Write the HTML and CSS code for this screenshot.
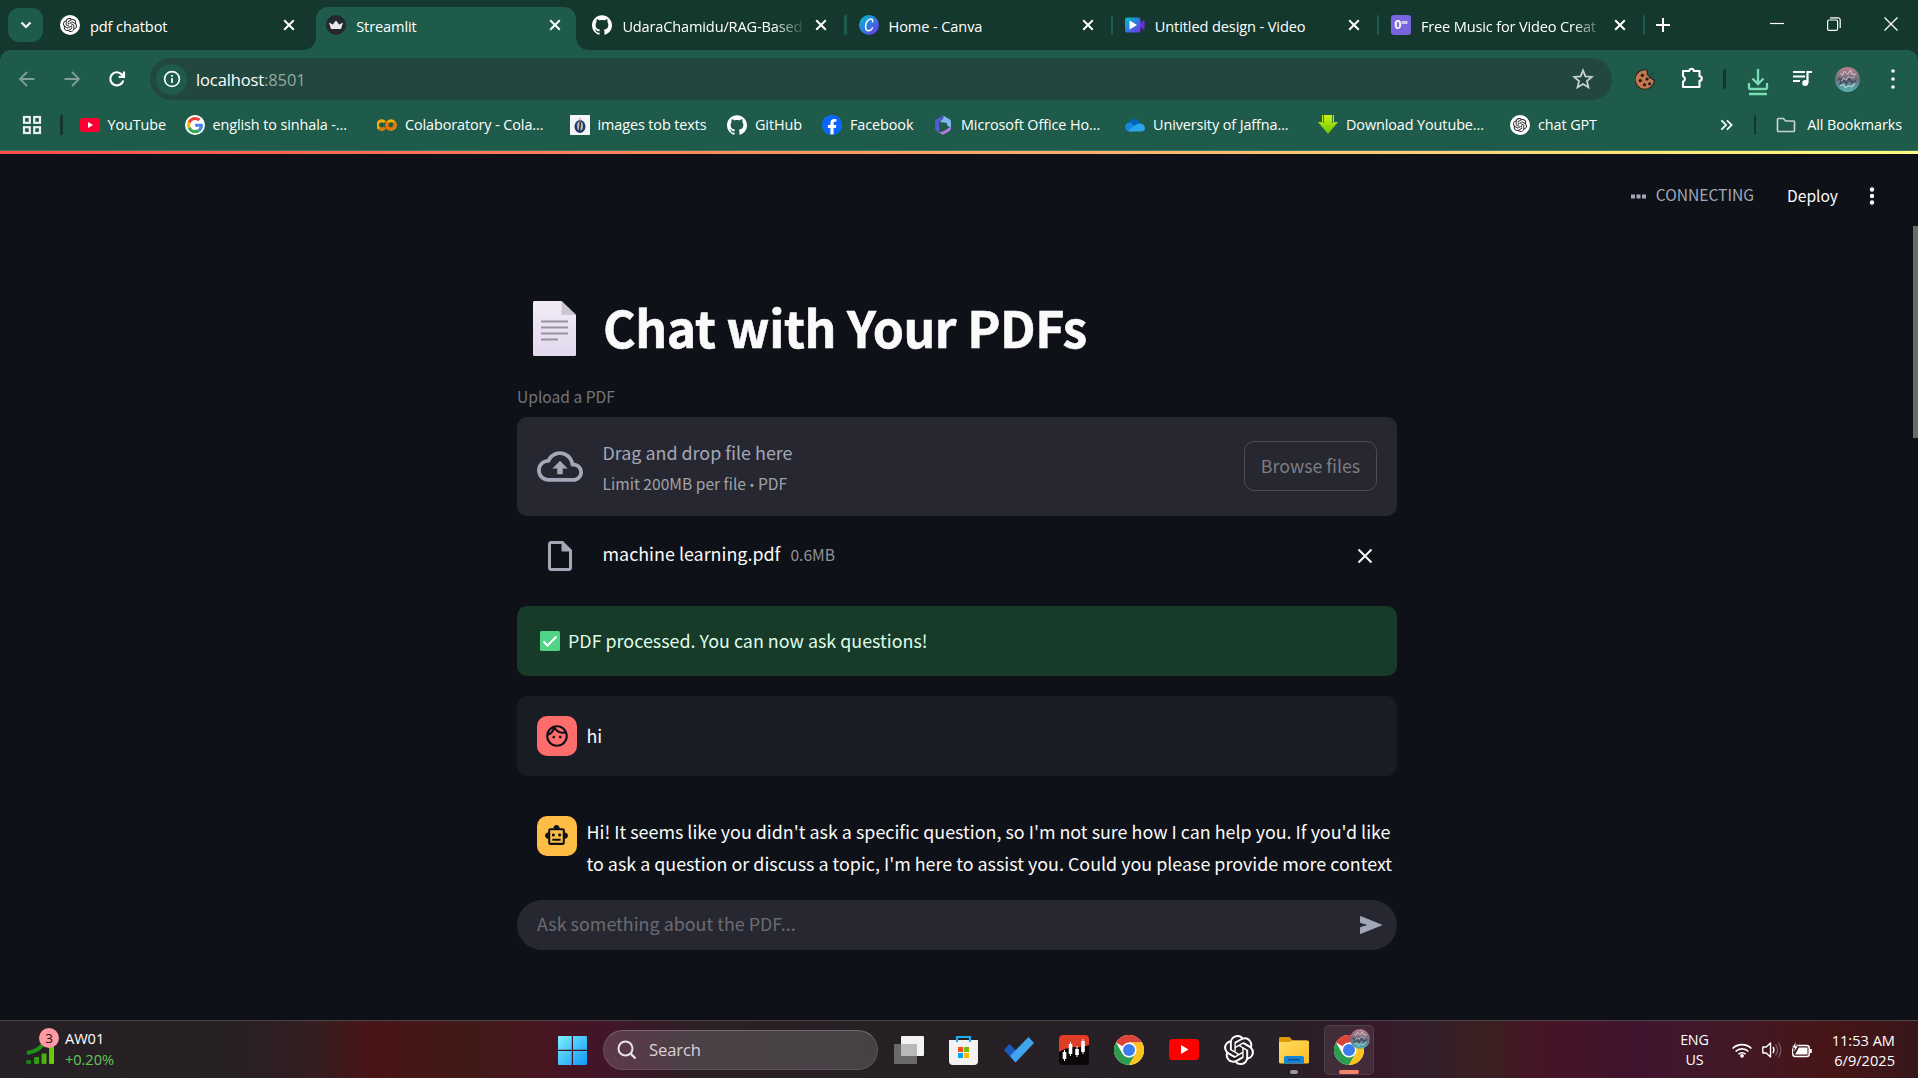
FILE: index.html
```html
<!DOCTYPE html>
<html lang="en">
<head>
<meta charset="utf-8">
<title>Streamlit</title>
<link rel="stylesheet" href="styles.css">
</head>
<body>
<svg class="defs" width="0" height="0">
  <defs>
    <symbol id="openai" viewBox="0 0 24 24"><path d="M22.2819 9.8211a5.9847 5.9847 0 0 0-.5157-4.9108 6.0462 6.0462 0 0 0-6.5098-2.9A6.0651 6.0651 0 0 0 4.9807 4.1818a5.9847 5.9847 0 0 0-3.9977 2.9 6.0462 6.0462 0 0 0 .7427 7.0966 5.98 5.98 0 0 0 .511 4.9107 6.051 6.051 0 0 0 6.5146 2.9001A5.9847 5.9847 0 0 0 13.2599 24a6.0557 6.0557 0 0 0 5.7718-4.2058 5.9894 5.9894 0 0 0 3.9977-2.9001 6.0557 6.0557 0 0 0-.7475-7.0729zm-9.022 12.6081a4.4755 4.4755 0 0 1-2.8764-1.0408l.1419-.0804 4.7783-2.7582a.7948.7948 0 0 0 .3927-.6813v-6.7369l2.02 1.1686a.071.071 0 0 1 .038.052v5.5826a4.504 4.504 0 0 1-4.4945 4.4944zm-9.6607-4.1254a4.4708 4.4708 0 0 1-.5346-3.0137l.142.0852 4.783 2.7582a.7712.7712 0 0 0 .7806 0l5.8428-3.3685v2.3324a.0804.0804 0 0 1-.0332.0615L9.74 19.9502a4.4992 4.4992 0 0 1-6.1408-1.6464zM2.3408 7.8956a4.485 4.485 0 0 1 2.3655-1.9728V11.6a.7664.7664 0 0 0 .3879.6765l5.8144 3.3543-2.0201 1.1685a.0757.0757 0 0 1-.071 0l-4.8303-2.7865A4.504 4.504 0 0 1 2.3408 7.872zm16.5963 3.8558L13.1038 8.364 15.1192 7.2a.0757.0757 0 0 1 .071 0l4.8303 2.7913a4.4944 4.4944 0 0 1-.6765 8.1042v-5.6772a.79.79 0 0 0-.407-.667zm2.0107-3.0231l-.142-.0852-4.7735-2.7818a.7759.7759 0 0 0-.7854 0L9.409 9.2297V6.8974a.0662.0662 0 0 1 .0284-.0615l4.8303-2.7866a4.4992 4.4992 0 0 1 6.6802 4.66zM8.3065 12.863l-2.02-1.1638a.0804.0804 0 0 1-.038-.0567V6.0742a4.4992 4.4992 0 0 1 7.3757-3.4537l-.142.0805L8.704 5.459a.7948.7948 0 0 0-.3927.6813zm1.0976-2.3654l2.602-1.4998 2.6069 1.4998v2.9994l-2.5974 1.4997-2.6067-1.4997Z"/></symbol>
    <symbol id="github" viewBox="0 0 24 24"><path d="M12 .297c-6.63 0-12 5.373-12 12 0 5.303 3.438 9.8 8.205 11.385.6.113.82-.258.82-.577 0-.285-.01-1.04-.015-2.04-3.338.724-4.042-1.61-4.042-1.61C4.422 18.07 3.633 17.7 3.633 17.7c-1.087-.744.084-.729.084-.729 1.205.084 1.838 1.236 1.838 1.236 1.07 1.835 2.809 1.305 3.495.998.108-.776.417-1.305.76-1.605-2.665-.3-5.466-1.332-5.466-5.93 0-1.31.465-2.38 1.235-3.22-.135-.303-.54-1.523.105-3.176 0 0 1.005-.322 3.3 1.23.96-.267 1.98-.399 3-.405 1.02.006 2.04.138 3 .405 2.28-1.552 3.285-1.23 3.285-1.23.645 1.653.24 2.873.12 3.176.765.84 1.23 1.91 1.23 3.22 0 4.61-2.805 5.625-5.475 5.92.42.36.81 1.096.81 2.22 0 1.606-.015 2.896-.015 3.286 0 .315.21.69.825.57C20.565 22.092 24 17.592 24 12.297c0-6.627-5.373-12-12-12"/></symbol>
    <symbol id="chatgpt" viewBox="0 0 20 20"><circle cx="10" cy="10" r="10" fill="#fff"/><use href="#openai" x="3" y="3" width="14" height="14" fill="#222"/></symbol>
    <symbol id="close" viewBox="0 0 12 12"><path d="M1.2 1.2l9.6 9.6M10.8 1.2l-9.6 9.6" stroke="#fff" stroke-width="2" fill="none"/></symbol>
    <symbol id="chrome" viewBox="0 0 30 30">
      <circle cx="15" cy="15" r="15" fill="#fff"/>
      <path d="M15 15L2 7.5A15 15 0 0 1 28 7.5H15z" fill="#db4437"/>
      <path d="M2 7.5A15 15 0 0 0 15 30L21.5 18.75 15 15 8.5 18.75z" fill="#2d9c4f"/>
      <path d="M28 7.5A15 15 0 0 1 15 30L21.5 18.75 15 7.5z" fill="#fcc31e"/>
      <circle cx="15" cy="15" r="7.5" fill="#fff"/><circle cx="15" cy="15" r="6" fill="#3b7ded"/>
    </symbol>
    <linearGradient id="canva" x1="0" y1="0" x2="1" y2="1"><stop offset="0" stop-color="#00c4cc"/><stop offset=".5" stop-color="#2f7be0"/><stop offset="1" stop-color="#7d2ae8"/></linearGradient>
    <linearGradient id="lime" x1="0" y1="0" x2="0" y2="1"><stop offset="0" stop-color="#c6ee1a"/><stop offset="1" stop-color="#6fc400"/></linearGradient>
    <linearGradient id="m365" x1="0" y1="0" x2="1" y2="1"><stop offset="0" stop-color="#5a4fc4"/><stop offset=".5" stop-color="#4b60d8"/><stop offset="1" stop-color="#8a4fd0"/></linearGradient>
    <linearGradient id="win" x1="0" y1="0" x2="1" y2="1"><stop offset="0" stop-color="#7df0ff"/><stop offset="1" stop-color="#0e97fa"/></linearGradient>
    <linearGradient id="folder" x1="0" y1="0" x2="1" y2="1"><stop offset="0" stop-color="#ffdc62"/><stop offset="1" stop-color="#fbbd22"/></linearGradient>
    <linearGradient id="stock" gradientUnits="userSpaceOnUse" x1="0" y1="0" x2="28" y2="0"><stop offset="0" stop-color="#0f7a14"/><stop offset="1" stop-color="#72cf0c"/></linearGradient>
    <linearGradient id="page" x1="0" y1="0" x2="0" y2="1"><stop offset="0" stop-color="#f1ebf6"/><stop offset="1" stop-color="#e2d8ec"/></linearGradient>
    <linearGradient id="avatar" x1="0" y1="0" x2="0" y2="1"><stop offset="0" stop-color="#b9818c"/><stop offset=".5" stop-color="#6d6f80"/><stop offset="1" stop-color="#54b3b3"/></linearGradient>
    <symbol id="face" viewBox="0 0 24 24"><circle cx="12" cy="12" r="12" fill="url(#avatar)"/><g fill="none"><path d="M5 6l2 2 2-4 3 3 3-4 1 4 4 0" stroke="#e9cfd6" stroke-width=".9"/><path d="M3 11l3 1-1 4 4-3 2 3 3-5 2 4 4-2" stroke="#343a4c" stroke-width="1.300" opacity=".8"/><path d="M6 14l2-3 3 1 2-3 3 2 3-2" stroke="#c9b7c4" stroke-width=".9"/><path d="M5 18l3-1 2 3 3-2 3 1 3-3" stroke="#a7e6e0" stroke-width="1"/></g></symbol>
  </defs>
</svg>

<div class="browser">
  <div class="tabstrip">
    <button class="tab-search"><svg width="12" height="8" viewBox="0 0 12 8"><path d="M1.500 1.500L6 6l4.500-4.500" stroke="#fff" stroke-width="2.200" fill="none"/></svg></button>
    <div class="tab"><svg class="fav"><use href="#chatgpt"/></svg><span class="tab-title">pdf chatbot</span><svg class="x"><use href="#close"/></svg></div>
    <div class="tab active"><svg class="fav" viewBox="0 0 20 20"><circle cx="10" cy="10" r="10" fill="#262730"/><path d="M3 7.500l3.800 2L10 5.500l3.200 4 3.800-2-2 6.500H5z" fill="#e8e8ea"/></svg><span class="tab-title">Streamlit</span><svg class="x"><use href="#close"/></svg></div>
    <div class="tab divided"><svg class="fav" fill="#fff"><use href="#github"/></svg><span class="tab-title fade">UdaraChamidu/RAG-Based</span><svg class="x"><use href="#close"/></svg></div>
    <div class="tab divided"><svg class="fav" viewBox="0 0 20 20"><circle cx="10" cy="10" r="10" fill="url(#canva)"/><path d="M13.600 6.800c.4-1.700-.4-2.800-1.700-2.800C8.800 4 6.600 8 6.600 11.400c0 2.600 1.200 4.300 3.100 4.300 1.700 0 3-1.200 3.800-2.700" stroke="#fff" stroke-width="1.500" fill="none" stroke-linecap="round"/></svg><span class="tab-title">Home - Canva</span><svg class="x"><use href="#close"/></svg></div>
    <div class="tab divided"><svg class="fav" viewBox="0 0 20 20"><path d="M13 10l6.500-5.500v11z" fill="#6d2ae0"/><rect x="0" y="2.500" width="15.500" height="15" rx="2.500" fill="url(#canva)"/><path d="M4.500 5.500v9l7.500-4.500z" fill="#fff"/></svg><span class="tab-title">Untitled design - Video</span><svg class="x"><use href="#close"/></svg></div>
    <div class="tab divided"><span class="fav music">0<sup>∞</sup></span><span class="tab-title fade">Free Music for Video Creat</span><svg class="x"><use href="#close"/></svg></div>
    <svg class="new-tab" viewBox="0 0 14 14"><path d="M7 0v14M0 7h14" stroke="#fff" stroke-width="2"/></svg>
    <div class="window-buttons">
      <svg width="14" height="14" viewBox="0 0 14 14"><path d="M0 6.500h14" stroke="#fff" stroke-width="1.200"/></svg>
      <svg width="14" height="14" viewBox="0 0 14 14"><rect x=".6" y="3" width="10" height="10.400" rx="1.500" fill="none" stroke="#fff" stroke-width="1.200"/><path d="M3 .8h8a2.200 2.200 0 0 1 2.200 2.200v8" fill="none" stroke="#fff" stroke-width="1.200"/></svg>
      <svg width="14" height="14" viewBox="0 0 14 14"><path d="M.5.5l13 13M13.500.5l-13 13" stroke="#fff" stroke-width="1.300"/></svg>
    </div>
  </div>

  <div class="chrome-bars">
    <div class="toolbar">
      <svg class="nav dim" viewBox="0 0 20 20"><path d="M17.500 10H3.500M10 3L3 10l7 7" /></svg>
      <svg class="nav dim" viewBox="0 0 20 20"><path d="M2.500 10h14M10 3l7 7-7 7"/></svg>
      <svg class="nav reload" viewBox="0 0 20 20"><path d="M16.300 11.500A6.600 6.600 0 1 1 14.800 5.400L16.500 7"/><path d="M17 2.500v5.300h-5.300"/></svg>
      <div class="omnibox">
        <span class="site-info"><svg width="18" height="18" viewBox="0 0 18 18"><circle cx="9" cy="9" r="7.400" fill="none" stroke="#fff" stroke-width="1.700"/><path d="M9 8v5M9 5v1.700" stroke="#fff" stroke-width="1.700"/></svg></span>
        <span class="url">localhost<span class="port">:8501</span></span>
        <svg class="star" viewBox="0 0 20 20"><path d="M10 2.200l2.200 5.400 5.800.5-4.400 3.800 1.400 5.700L10 14.500 5 17.600l1.400-5.700L2 8.100l5.800-.5z" fill="none" stroke="#c7d1ce" stroke-width="1.600"/></svg>
      </div>
      <div class="actions">
        <svg class="cookie" viewBox="0 0 20 20"><path d="M11 .8a9.300 9.300 0 1 0 7.600 9.700c-1.400.2-2.400-.4-2.600-1.700-1.700.2-2.800-.7-2.500-2.300-1.600-.4-2.500-1.900-1.500-3.400z" fill="#c2784e" stroke="#2b211f"/><g fill="#1f1718"><circle cx="7" cy="6" r="1.500"/><circle cx="11.500" cy="9.500" r="1.500"/><circle cx="5" cy="11" r="1.500"/><circle cx="9" cy="15" r="1.500"/><circle cx="14" cy="14" r="1.500"/><circle cx="16.500" cy="4.500" r=".8"/></g></svg>
        <svg class="puzzle" viewBox="0 0 22 22"><path d="M2 4h6.300a2.200 2.200 0 0 1 4.400 0H18.500v5.200a2.300 2.300 0 0 1 0 4.600V20H2v-5.200a3 3 0 0 0 0-5.600z" fill="none" stroke="#fff" stroke-width="2.100" stroke-linejoin="round"/></svg>
        <i class="sep"></i>
        <svg class="download" viewBox="0 0 22 28"><path d="M11 1v15M5.500 10.500L11 16l5.500-5.500M2 15v4.500a1.500 1.500 0 0 0 1.500 1.500h15a1.500 1.500 0 0 0 1.500-1.500V15M2 26h18" fill="none" stroke="#7bdcb5" stroke-width="2.300"/></svg>
        <svg class="media" viewBox="0 0 20 20"><path d="M1 4h12M1 8.500h12M1 13h7" stroke="#fff" stroke-width="2.200"/><path d="M15.500 15V4H20" stroke="#fff" stroke-width="2.200" fill="none"/><circle cx="13.200" cy="15" r="3" fill="#fff"/></svg>
        <svg class="avatar"><use href="#face"/></svg>
        <svg class="menu" viewBox="0 0 10 24"><g fill="#fff"><circle cx="5" cy="4" r="1.800"/><circle cx="5" cy="12" r="1.800"/><circle cx="5" cy="20" r="1.800"/></g></svg>
      </div>
    </div>

    <div class="bookmarks">
      <svg class="apps" viewBox="0 0 20 20"><g fill="none" stroke="#e8efec" stroke-width="2.200"><rect x="2" y="2" width="5.800" height="5.800"/><rect x="12.200" y="2" width="5.800" height="5.800"/><rect x="2" y="12.200" width="5.800" height="5.800"/><rect x="12.200" y="12.200" width="5.800" height="5.800"/></g></svg>
      <i class="sep"></i>
      <a class="bm w105"><svg class="fav" viewBox="0 0 20 20"><rect y="3" width="20" height="14" rx="3" fill="#f03"/><path d="M8 7v6l5-3z" fill="#fff"/></svg>YouTube</a>
      <a class="bm w193"><svg class="fav" viewBox="0 0 48 48"><circle cx="24" cy="24" r="24" fill="#fff"/><g transform="translate(4.500 4.500) scale(.82)"><path fill="#EA4335" d="M24 9.500c3.540 0 6.710 1.220 9.210 3.600l6.850-6.850C35.900 2.380 30.470 0 24 0 14.620 0 6.510 5.380 2.560 13.220l7.980 6.190C12.430 13.720 17.740 9.500 24 9.500z"/><path fill="#4285F4" d="M46.980 24.550c0-1.570-.15-3.090-.38-4.550H24v9.020h12.940c-.58 2.960-2.260 5.480-4.780 7.180l7.730 6c4.510-4.180 7.090-10.360 7.090-17.650z"/><path fill="#FBBC05" d="M10.530 28.590c-.48-1.450-.76-2.990-.76-4.590s.27-3.140.76-4.590l-7.980-6.190C.92 16.460 0 20.120 0 24c0 3.880.92 7.540 2.560 10.780l7.970-6.190z"/><path fill="#34A853" d="M24 48c6.480 0 11.930-2.130 15.890-5.810l-7.730-6c-2.150 1.450-4.920 2.300-8.160 2.300-6.260 0-11.570-4.220-13.470-9.910l-7.980 6.190C6.510 42.620 14.620 48 24 48z"/></g></svg>english to sinhala -...</a>
      <a class="bm w192"><svg class="fav" viewBox="0 0 20 20"><g fill="none" stroke-width="3"><path d="M7.800 7.200A4.200 4.200 0 1 0 7.800 12.800" stroke="#f9ab00"/><path d="M2.200 13.200A4.300 4.300 0 0 0 8 12.500" stroke="#e8710a"/><circle cx="14" cy="10" r="4.300" stroke="#f9ab00"/><path d="M11 13a4.300 4.300 0 0 1 0-6" stroke="#e8710a"/><path d="M17 7a4.300 4.300 0 0 1-6 6" stroke="#e8710a"/></g></svg>Colaboratory - Cola...</a>
      <a class="bm w158"><svg class="fav" viewBox="0 0 20 20"><rect width="20" height="20" fill="#f5f5f7"/><ellipse cx="10" cy="11.500" rx="5.500" ry="6.500" fill="#1d3a70"/><ellipse cx="10" cy="11" rx="3" ry="4.500" fill="#b8b6a8"/><path d="M10.500 6.500L9.500 16" stroke="#333" stroke-width="1.500"/><circle cx="10" cy="4" r="1.500" fill="#ccc"/></svg>images tob texts</a>
      <a class="bm w95"><svg class="fav" fill="#fff"><use href="#github"/></svg>GitHub</a>
      <a class="bm w111"><svg class="fav" viewBox="0 0 24 24"><circle cx="12" cy="12" r="11.500" fill="#fff"/><path fill="#0866ff" d="M24 12.073c0-6.627-5.373-12-12-12s-12 5.373-12 12c0 5.990 4.388 10.954 10.125 11.854v-8.385H7.078v-3.470h3.047V9.430c0-3.007 1.792-4.669 4.533-4.669 1.312 0 2.686.235 2.686.235v2.953H15.830c-1.491 0-1.956.925-1.956 1.874v2.250h3.328l-.532 3.470h-2.796v8.385C19.612 23.027 24 18.062 24 12.073z"/></svg>Facebook</a>
      <a class="bm w192b"><svg class="fav" viewBox="0 0 20 20"><path d="M10 .5L3.500 4.200Q2 5 2 7v6q0 2 1.500 3l3 1.500Q6 16 6 14V8q0-2 1.500-3L12 1.500z" fill="url(#m365)"/><path d="M10 .5l6.500 3.700Q18 5 18 7v6l-4-2.500V8L7 7q.5-1.500 2-2.500Q12 2.500 10 .5z" fill="#7fb6ee"/><path d="M18 13q0 2-1.500 3L11 19.300q-1 .5-2 0L5 17q4 .5 6-1l7-4.500z" fill="#b57be6"/></svg>Microsoft Office Ho...</a>
      <a class="bm w192c"><svg class="fav" viewBox="0 0 20 20"><path d="M4 11a5.500 5.500 0 0 1 10.500-3.500L17 11z" fill="#0364b8"/><circle cx="4.500" cy="12" r="4.500" fill="#1487d8"/><path d="M4 16.500c-2-.5 8-8.500 10.500-8 4 0 5.500 3 5.500 4.500 0 2-1.500 3.500-3.500 3.500z" fill="#28a8ea"/></svg>University of Jaffna...</a>
      <a class="bm w192d"><svg class="fav" viewBox="0 0 20 20"><path d="M4 0h12v7h4L10 19 0 7h4z" fill="url(#lime)"/><path d="M5.500 0v8M14.500 0v8" stroke="#3f7f2a" stroke-width="1"/></svg>Download Youtube...</a>
      <a class="bm"><svg class="fav"><use href="#chatgpt"/></svg>chat GPT</a>
      <div class="bm-end">
        <svg class="more" viewBox="0 0 14 12"><path d="M1.500 1l5 5-5 5M7.500 1l5 5-5 5" fill="none" stroke="#fff" stroke-width="1.900"/></svg>
        <i class="sep"></i>
        <svg class="fav" viewBox="0 0 20 20"><path d="M2.500 3.500h5l2 2.500h8q1 0 1 1v8.500q0 1-1 1h-15q-1 0-1-1v-11q0-1 1-1z" fill="none" stroke="#c7d1ce" stroke-width="1.700"/></svg>
        <span>All Bookmarks</span>
      </div>
    </div>
  </div>

  <main class="app">
    <div class="decoration"></div>
    <header class="app-header">
      <svg width="15" height="5" viewBox="0 0 15 5"><path d="M0 .5h4v4H0zM5.500.5h4v4h-4zM11 .5h4v4h-4z" fill="#a3a8b8"/></svg>
      <span class="status">CONNECTING</span>
      <span class="deploy">Deploy</span>
      <svg class="kebab" width="6" height="18" viewBox="0 0 6 18"><g fill="#fafafa"><circle cx="3" cy="2.500" r="2.200"/><circle cx="3" cy="9" r="2.200"/><circle cx="3" cy="15.500" r="2.200"/></g></svg>
    </header>
    <div class="scroll-thumb"></div>

    <div class="column">
      <h1 class="title"><svg width="43" height="55" viewBox="0 0 43 55"><path d="M1.500 0h27L43 14v39.500q0 1.500-1.500 1.500h-40Q0 55 0 53.500v-52Q0 0 1.500 0z" fill="url(#page)"/><path d="M28.500 0L43 14H30q-1.500 0-1.500-1.500z" fill="#cdc5d3"/><path d="M8 20.500h27M8 26.500h27M8 32.500h27M8 38.500h17" stroke="#998fa3" stroke-width="2"/></svg><span>Chat with Your PDFs</span></h1>

      <div class="label">Upload a PDF</div>
      <section class="dropzone">
        <svg class="cloud" viewBox="0 4 24 16"><path fill="#a3a8b8" d="M19.350 10.040C18.670 6.590 15.640 4 12 4 9.110 4 6.600 5.640 5.350 8.040 2.340 8.360 0 10.910 0 14c0 3.310 2.690 6 6 6h13c2.760 0 5-2.240 5-5 0-2.640-2.050-4.780-4.650-4.960zM19 18H6c-2.210 0-4-1.790-4-4 0-2.050 1.530-3.760 3.560-3.970l1.070-.11.5-.95C8.080 7.140 9.940 6 12 6c2.620 0 4.880 1.860 5.390 4.430l.3 1.500 1.530.11c1.560.1 2.780 1.410 2.780 2.960 0 1.650-1.350 3-3 3zM8 13h2.550v3h2.900v-3H16l-4-4-4 4z"/></svg>
        <div class="hint"><span>Drag and drop file here</span><small>Limit 200MB per file <i class="dot">•</i> PDF</small></div>
        <button class="browse">Browse files</button>
      </section>

      <div class="file">
        <svg class="doc" viewBox="0 0 24 24"><path fill="#a3a8b8" d="M14 2H6c-1.100 0-1.990.9-1.990 2L4 20c0 1.100.89 2 1.990 2H18c1.100 0 2-.9 2-2V8l-6-6zM6 20V4h7v5h5v11H6z"/></svg>
        <span class="file-name">machine learning.pdf</span><span class="file-size">0.6MB</span>
        <svg class="remove" viewBox="0 0 16 16"><path d="M1.500 1.500l13 13M14.500 1.500l-13 13" stroke="#fafafa" stroke-width="2"/></svg>
      </div>

      <div class="success"><svg width="20" height="20" viewBox="0 0 20 20"><rect width="20" height="20" rx="1.500" fill="#4fd585"/><path d="M3.500 10.500l4 4L16.500 5.500" fill="none" stroke="#fff" stroke-width="2"/></svg><span>PDF processed. You can now ask questions!</span></div>

      <div class="message user">
        <span class="who red"><svg width="26" height="26" viewBox="0 0 24 24"><path d="M10.250 13c0 .69-.56 1.250-1.250 1.250S7.750 13.690 7.750 13s.56-1.250 1.250-1.250 1.250.56 1.250 1.250zM15 11.750c-.69 0-1.250.56-1.250 1.250s.56 1.250 1.250 1.250 1.250-.56 1.250-1.250-.56-1.250-1.250-1.250zm7 .25c0 5.520-4.480 10-10 10S2 17.520 2 12 6.480 2 12 2s10 4.480 10 10zM10.660 4.120C12.060 6.440 14.600 8 17.500 8c.46 0 .91-.05 1.340-.12C17.440 5.560 14.900 4 12 4c-.46 0-.91.05-1.340.12zM4.420 9.470c1.710-.97 3.030-2.550 3.660-4.440C6.370 6 5.050 7.580 4.420 9.470zM20 12c0-.78-.12-1.530-.33-2.240-.7.15-1.420.24-2.170.24-3.130 0-5.920-1.440-7.760-3.690C8.690 8.870 6.600 10.880 4 11.860c.01.04 0 .09 0 .14 0 4.410 3.590 8 8 8s8-3.590 8-8z" fill="#0e1117"/></svg></span>
        <p>hi</p>
      </div>
      <div class="message bot">
        <span class="who amber"><svg width="25" height="25" viewBox="0 0 24 24"><path d="M20 9V7c0-1.100-.9-2-2-2h-3c0-1.660-1.340-3-3-3S9 3.340 9 5H6c-1.100 0-2 .9-2 2v2c-1.660 0-3 1.340-3 3s1.340 3 3 3v4c0 1.100.9 2 2 2h12c1.100 0 2-.9 2-2v-4c1.660 0 3-1.340 3-3s-1.340-3-3-3zm-2 10H6V7h12v12zm-9-6c-.83 0-1.500-.67-1.500-1.500S8.170 10 9 10s1.500.67 1.500 1.500S9.830 13 9 13zm7.500-1.500c0 .83-.67 1.500-1.500 1.500s-1.500-.67-1.500-1.500.67-1.500 1.500-1.500 1.500.67 1.500 1.500zM8 15h8v2H8v-2z" fill="#0e1117"/></svg></span>
        <p>Hi! It seems like you didn't ask a specific question, so I'm not sure how I can help you. If you'd like<br>to ask a question or discuss a topic, I'm here to assist you. Could you please provide more context</p>
      </div>

      <div class="ask"><span>Ask something about the PDF...</span><svg width="24" height="20" viewBox="0 0 24 20"><path d="M1.500 1.500L22.500 10l-21 8.500v-6l9-2.500-9-2.500z" fill="#a3a8b8" stroke="#a3a8b8" stroke-linejoin="round"/></svg></div>
    </div>
  </main>
</div>

<footer class="taskbar">
  <div class="widget">
    <svg width="30" height="24" viewBox="0 0 30 24"><g fill="url(#stock)"><rect x="0" y="19" width="5" height="4" rx="1.500"/><rect x="8" y="16" width="5" height="7" rx="1"/><rect x="15.500" y="12.500" width="5" height="10.500" rx="1"/><rect x="23" y="5" width="5" height="18" rx="1"/></g><path d="M1 12Q14 10 19 0" stroke="#22911a" stroke-width="4" fill="none"/></svg>
    <b class="badge">3</b>
    <div class="quote"><span>AW01</span><span class="up">+0.20%</span></div>
  </div>
  <div class="dock">
    <svg class="start" viewBox="0 0 29 29"><path d="M0 1Q0 0 1 0h12.800v13.800H0zM15 0h13q1 0 1 1v12.800H15zM0 15h13.800v14H1q-1 0-1-1zM15 15h14v13q0 1-1 1H15z" fill="url(#win)"/></svg>
    <div class="search"><svg width="20" height="20" viewBox="0 0 20 20"><circle cx="8.500" cy="8.500" r="7" fill="none" stroke="#e8e3e6" stroke-width="2"/><path d="M13.500 13.500l5 5" stroke="#e8e3e6" stroke-width="2.400"/></svg><span>Search</span></div>
    <svg class="t1" viewBox="0 0 30 28"><rect x="0" y="8" width="23" height="20" rx="1" fill="#6b696b"/><rect x="7" y="0" width="23" height="20" rx="1" fill="#f3f3f3"/><rect x="7" y="8" width="16" height="12" fill="#b9b9b9"/></svg>
    <svg class="t2" viewBox="0 0 29 29"><path d="M0 4h29v21q0 4-4 4H4q-4 0-4-4z" fill="#f2f2f2"/><path d="M8 6V1h13v5" fill="none" stroke="#1fb0ef" stroke-width="2.200"/><path d="M9 11h5v5H9z" fill="#f25022"/><path d="M15 11h5v5h-5z" fill="#7fba00"/><path d="M9 17h5v5H9z" fill="#00a4ef"/><path d="M15 17h5v5h-5z" fill="#ffb900"/></svg>
    <svg class="t3" viewBox="0 0 30 26"><path d="M0 13l5.500-6 12 12-6 6.500z" fill="#185abd"/><path d="M24.500 0L30 6 11.500 25.500 6 19z" fill="#41a5ee"/></svg>
    <svg class="t3" viewBox="0 0 30 30"><rect width="30" height="30" rx="4" fill="#0b0607"/><path d="M0 17V4q0-4 4-4h22q4 0 4 4v6Q22 13 17 12 8 12 0 17z" fill="#df3d26"/><path d="M5.500 15v11M11.500 7v14M18 11v11M24 4v15" stroke="#fff" stroke-width="1"/><path d="M5.500 17v7M11.500 9v10M18 14v6M24 6v11" stroke="#fff" stroke-width="3.600"/></svg>
    <svg class="t4"><use href="#chrome"/></svg>
    <svg class="t4" viewBox="0 0 30 30"><rect y="4" width="30" height="21" rx="3.500" fill="#f00"/><path d="M12 10v9l7.500-4.500z" fill="#fff"/></svg>
    <svg class="t4" fill="#fff"><use href="#openai"/></svg>
    <div class="app-icon"><svg width="30" height="27" viewBox="0 0 30 27"><path d="M0 1.500Q0 0 1.500 0h9l3 3.500H28V8H0z" fill="#dd9b0a"/><path d="M0 5h10.500L13 3.500h15.500q1.500 0 1.500 1.500v20q0 1.500-1.500 1.500h-27Q0 26.500 0 25z" fill="url(#folder)"/><path d="M5 26.500V21q0-2 2-2h16q2 0 2 2v5.500z" fill="#1583d8"/><path d="M9 22.700h12" stroke="#0b5191" stroke-width="1.500"/></svg><i class="run"></i></div>
    <div class="app-icon focused"><svg width="30" height="30"><use href="#chrome"/></svg><svg class="profile"><use href="#face"/></svg><i class="run wide"></i></div>
  </div>
  <div class="tray">
    <div class="lang"><span>ENG</span><span>US</span></div>
    <svg class="wifi" viewBox="0 0 20 16"><g fill="none" stroke="#fff" stroke-width="1.600"><path d="M.6 6.500a13.300 13.300 0 0 1 18.800 0M3.600 9.500a9 9 0 0 1 12.800 0M6.400 12.300a5.100 5.100 0 0 1 7.200 0"/></g><circle cx="10" cy="13.800" r="1.900" fill="#fff"/></svg>
    <svg class="vol" viewBox="0 0 20 18"><path d="M.8 6h3.400L8.500 2v14L4.200 12H.8z" fill="none" stroke="#fff" stroke-width="1.400" stroke-linejoin="round"/><path d="M11 6q2 3 0 6" fill="none" stroke="#fff" stroke-width="1.400"/><path d="M13.500 3.500q4 5.500 0 11M16.300 1.500q5 7.500 0 15" fill="none" stroke="#7d5a68" stroke-width="1.300"/></svg>
    <svg class="bat" viewBox="0 0 20 17"><rect x=".8" y="4.500" width="16.400" height="11" rx="2.500" fill="none" stroke="#fff" stroke-width="1.500"/><path d="M7 6.500h8.500v7H3z" fill="#fff"/><path d="M18 8h1.800v4H18z" fill="#fff"/><path d="M4 0L0 7h2.500L1.500 12 6.500 5H3.800z" fill="#fff" stroke="#40151e" stroke-width=".8"/></svg>
    <div class="clock"><span>11:53 AM</span><span>6/9/2025</span></div>
  </div>
</footer>
</body>
</html>
```
FILE: styles.css
```css
* { box-sizing: border-box; }
body { margin: 0; width: 1918px; height: 1078px; overflow: hidden; background: #0e1117; display: flex; flex-direction: column; font: 14.6px/20px "Open Sans", "Noto Sans", sans-serif; letter-spacing: -.12px; color: #fff; }
button { font: inherit; color: inherit; letter-spacing: inherit; }
svg { flex: none; display: block; }
.defs { position: absolute; }
.fav { width: 20px; height: 20px; flex: none; }

.browser { height: 1020px; display: flex; flex-direction: column; }
.tabstrip { height: 50px; background: #14382e; display: flex; padding-left: 8px; }
.tab-search { width: 35px; height: 34px; margin: 8px 7px 0 0; padding: 0; border: 0; border-radius: 11px; background: #1e5b4a; display: flex; align-items: center; justify-content: center; }
.tab { position: relative; width: 260px; height: 43px; margin: 7px 6.200px 0 0; padding: 0 15px 7px 10px; display: flex; align-items: center; flex: none; border-radius: 12px 12px 0 0; }
.tab.active { background: #1e5b4a; }
.tab.active::before, .tab.active::after { content: ""; position: absolute; bottom: 0; width: 12px; height: 12px; }
.tab.active::before { left: -12px; background: radial-gradient(circle at 0 0, transparent 11.500px, #1e5b4a 12px); }
.tab.active::after { right: -12px; background: radial-gradient(circle at 100% 0, transparent 11.500px, #1e5b4a 12px); }
.tab.divided::after { content: ""; position: absolute; right: -4.500px; top: 8px; width: 2.500px; height: 20px; border-radius: 1px; background: #1e5b4a; }
.tab-title { width: 180px; margin: 1px 0 0 10px; white-space: nowrap; }
.tab-title.fade { letter-spacing: -.17px; -webkit-mask-image: linear-gradient(90deg, #000 152px, rgba(0,0,0,.15) 179px); mask-image: linear-gradient(90deg, #000 152px, rgba(0,0,0,.15) 179px); }
.x { width: 12px; height: 12px; margin-left: auto; }
.music { border-radius: 3px; background: #7766dd; font: bold 13px/20px "Liberation Sans", sans-serif; text-align: center; }
.music sup { font-size: 9px; line-height: 1; vertical-align: 4px; }
.new-tab { width: 14px; height: 14px; margin: 18px 0 0 9px; }
.window-buttons { margin: 17px 20px 0 auto; display: flex; gap: 43px; }

.chrome-bars { height: 101px; background: #1e5b4a; box-shadow: inset 0 -1px #3f7a69; position: relative; }
.chrome-bars::before, .chrome-bars::after { content: ""; position: absolute; top: 0; width: 10px; height: 10px; }
.chrome-bars::before { left: 0; background: radial-gradient(circle at 100% 100%, transparent 9.500px, #14382e 10px); }
.chrome-bars::after { right: 0; background: radial-gradient(circle at 0 100%, transparent 9.500px, #14382e 10px); }
.toolbar { height: 58px; padding-left: 17px; display: flex; align-items: center; }
.nav { width: 20px; height: 20px; margin-right: 25px; fill: none; stroke: #fff; stroke-width: 2; }
.nav.dim { stroke: #7f9f95; stroke-width: 1.800; }
.nav.reload { margin-right: 23px; stroke-width: 2.200; }
.omnibox { width: 1462px; height: 42px; border-radius: 21px; background: #21473e; display: flex; align-items: center; padding: 0 18px 0 6px; }
.site-info { width: 31px; height: 31px; border-radius: 50%; background: #1e5b4a; display: flex; align-items: center; justify-content: center; }
.url { margin: 1px 0 0 9px; font-size: 16.500px; }
.port { color: #94a8a2; }
.star { width: 22px; height: 22px; margin-left: auto; }
.actions { display: flex; align-items: center; }
.cookie { width: 21px; height: 21px; margin-left: 23px; }
.puzzle { width: 22px; height: 22px; margin-left: 25px; margin-top: -3px; }
.sep { width: 2.500px; height: 20px; border-radius: 1px; background: #14382e; flex: none; }
.actions .sep { margin-left: 20px; }
.download { width: 22px; height: 28px; margin: 6px 0 0 21px; }
.media { width: 20px; height: 20px; margin: -2px 0 0 23px; }
.avatar { width: 25px; height: 25px; margin-left: 23px; }
.menu { width: 10px; height: 24px; margin-left: 28px; }

.bookmarks { height: 34px; padding-left: 22px; display: flex; align-items: center; white-space: nowrap; font-size: 14.400px; letter-spacing: -.09px; }
.apps { width: 20px; height: 20px; }
.bookmarks > .sep { margin: 0 17px 0 18px; }
.bm { display: flex; align-items: center; gap: 8px; flex: none; }
.w105 { width: 105px; } .w193 { width: 192.500px; } .w192 { width: 192.500px; } .w158 { width: 157.500px; } .w95 { width: 95px; }
.w111 { width: 111px; } .w192b { width: 192px; } .w192c { width: 193px; } .w192d { width: 192px; }
.bm-end { margin: 0 16px 0 auto; display: flex; align-items: center; }
.more { width: 13px; height: 12px; margin-right: 21px; }
.bm-end .fav { margin: 0 11px 0 20px; }

.app { position: relative; flex: 1; font-family: "Noto Sans CJK SC", sans-serif; font-size: 17.900px; line-height: 32px; letter-spacing: 0; color: #fafafa; }
.decoration { height: 3px; background: linear-gradient(90deg, #ff4b4b, #ff8a5c 36%, #ffbd70 63%, #fffd80); }
.app-header { height: 84px; padding-right: 43px; display: flex; align-items: center; justify-content: flex-end; font-size: 15.600px; }
.status { margin: -4px 33px 0 10px; color: #a3a8b8; }
.deploy { margin: -2px 31px 0 0; }
.scroll-thumb { position: absolute; right: 0; top: 75px; width: 5px; height: 212px; background: #6b6b6b; }
.column { width: 880px; margin: 0 auto; position: relative; left: -2px; }
.title { height: 72px; margin: 52px 0 0 16px; display: flex; align-items: center; font-size: 49.900px; line-height: 72px; font-weight: 700; letter-spacing: -.4px; -webkit-text-stroke: .6px #fafafa; white-space: nowrap; }
.title svg { margin-top: 4px; }
.title span { margin-left: 27px; }
.label { height: 32px; margin-top: 18px; margin-bottom: 5px; color: #73757b; font-size: 15.600px; }
.dropzone { height: 99px; border-radius: 10px; background: #262730; display: flex; align-items: center; padding: 0 20px; }
.cloud { width: 46px; height: 31px; }
.hint { display: flex; flex-direction: column; margin-left: 19.500px; color: #a3a8b8; }
.hint small { font-size: 15.600px; color: #a0a1a8; line-height: 30px; }
.dot { font: 13px/20px "Noto Sans", sans-serif; }
.browse { width: 133px; height: 50px; margin: -1px 0 0 auto; border: 1px solid #4b4c55; border-radius: 10px; background: none; color: #7c7d82; padding: 0 0 3px; font-size: 17.800px; }
.file { height: 80px; display: flex; align-items: center; padding: 0 24px; }
.doc { width: 36px; height: 36px; margin-left: 1px; }
.file-name { margin: -6px 0 0 24.500px; }
.file-size { margin: -5px 0 0 10px; font-size: 15.600px; color: #909298; }
.remove { width: 16px; height: 16px; margin: -1px 0 0 auto; }
.success { height: 70px; margin-top: 10px; border-radius: 10px; background: #183a28; color: #dffde9; display: flex; align-items: center; padding-left: 23px; gap: 8px; }
.success span { margin-top: -2px; }
.message { margin-top: 20px; padding: 20px; border-radius: 10px; display: flex; gap: 9.500px; }
.message p { margin: -1px 0 0; white-space: nowrap; }
.user { height: 80px; background: #1a1c24; }
.user p { line-height: 40px; }
.bot { height: 104px; margin-top: 20px; }
.who { width: 40px; height: 40px; flex: none; border-radius: 10px; display: flex; align-items: center; justify-content: center; padding: 0 1px 1px 0; }
.red { background: #ff6c6c; }
.amber { background: #ffbd45; }
.ask { height: 50px; border-radius: 25px; background: #262730; color: #6b6c73; display: flex; align-items: center; justify-content: space-between; padding: 0 14px 0 20px; }
.ask span { margin-top: -5px; }

.taskbar { height: 58px; border-top: 1px solid #4d4348; display: flex; align-items: center; position: relative; background: linear-gradient(90deg, #262126 0, #272025 230px, #331e20 310px, #4a1416 375px, #401a17 470px, #481520 540px, #421528 600px, #2b2026 700px, #262025 900px, #272026 1280px, #36192a 1370px, #33202a 1430px, #3b1f20 1490px, #471426 1540px, #40142e 1640px, #40182a 1700px, #471516 1830px, #38161a 1918px); }
.widget { position: relative; width: 558px; display: flex; align-items: center; }
.widget > svg { margin: 6px 0 0 26px; }
.badge { position: absolute; left: 39px; top: -2px; width: 20px; height: 20px; border-radius: 50%; background: #ff99a4; color: #111; font-weight: 400; font-size: 13.500px; line-height: 20px; text-align: center; }
.quote { display: flex; flex-direction: column; margin: -2px 0 0 9px; line-height: 20.500px; letter-spacing: -.05px; }
.up { color: #62c655; }
.dock { display: flex; align-items: center; height: 57px; padding-top: 1px; }
.start { width: 29px; height: 29px; }
.search { width: 275px; height: 40px; margin: 0 16px; border-radius: 20px; background: rgba(255,255,255,.15); border: 1px solid rgba(255,255,255,.1); border-top-color: rgba(255,255,255,.22); display: flex; align-items: center; padding-left: 13px; gap: 12px; font-size: 16.600px; color: #d8d2d6; }
.t1 { width: 30px; height: 28px; }
.t2 { width: 29px; height: 29px; margin-left: 25px; }
.t3 { width: 30px; height: 30px; margin-left: 25px; }
.t2 + .t3 { margin-left: 26px; }
.t4 { width: 30px; height: 30px; margin-left: 25px; }
.app-icon { position: relative; width: 50px; height: 50px; margin-left: 15px; border-radius: 5px; display: flex; align-items: center; justify-content: center; }
.app-icon.focused { margin-left: 5px; background: rgba(255,255,255,.08); border: 1px solid rgba(255,255,255,.08); }
.profile { position: absolute; right: 3px; top: 3px; width: 20px; height: 20px; }
.run { position: absolute; bottom: 1px; left: 21px; width: 8px; height: 4px; border-radius: 2px; background: #9c969a; }
.run.wide { left: 14px; bottom: 0; width: 20px; background: #f5836b; }
.tray { margin: 0 23px 0 auto; display: flex; align-items: center; line-height: 20px; }
.lang { display: flex; flex-direction: column; text-align: center; letter-spacing: -.2px; margin: 1px 23px 0 0; font-size: 14.300px; }
.wifi { width: 20px; height: 16px; }
.vol { width: 20px; height: 18px; margin: 0 10px; }
.bat { width: 20px; height: 17px; margin-right: 20px; }
.clock { display: flex; flex-direction: column; text-align: right; font-size: 14.600px; letter-spacing: 0; }
```
